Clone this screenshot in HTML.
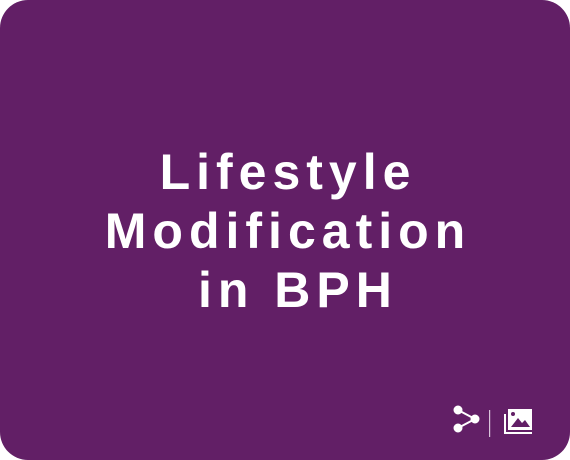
<!DOCTYPE html>
<html><head><style>
html,body{margin:0;padding:0;background:#fff;}
.card{position:absolute;left:0;top:0;width:570px;height:460px;background:#621f66;border-radius:28px;overflow:hidden;}
.t{position:absolute;left:3px;top:143px;width:570px;text-align:center;color:#fff;font-family:"Liberation Sans",sans-serif;font-weight:bold;font-size:50px;line-height:59px;letter-spacing:6px;}
</style></head><body>
<div class="card">
<div class="t">Lifestyle<br>Modification<br>&nbsp;in BPH</div>
<svg style="position:absolute;left:450px;top:405px" width="90" height="35" viewBox="0 0 90 35">
<g fill="#fff" stroke="#fff" stroke-width="2">
<line x1="8" y1="5" x2="25" y2="14"/><line x1="8" y1="23" x2="25" y2="14"/>
<circle cx="8" cy="5" r="3.5"/><circle cx="8" cy="23" r="3.5"/><circle cx="25" cy="14" r="3.5"/>
</g>
<rect x="39" y="5" width="1.2" height="27" fill="#d9c4db"/>
<path d="M55 9 V28 H82" fill="none" stroke="#fff" stroke-width="2"/>
<rect x="58" y="4" width="24" height="21" fill="#fff"/>
<circle cx="63" cy="9" r="2" fill="#621f66"/>
<path d="M61 22 L68 13 L72 18 L75 15 L80 22 Z" fill="#621f66"/>
</svg>
</div>
</body></html>
